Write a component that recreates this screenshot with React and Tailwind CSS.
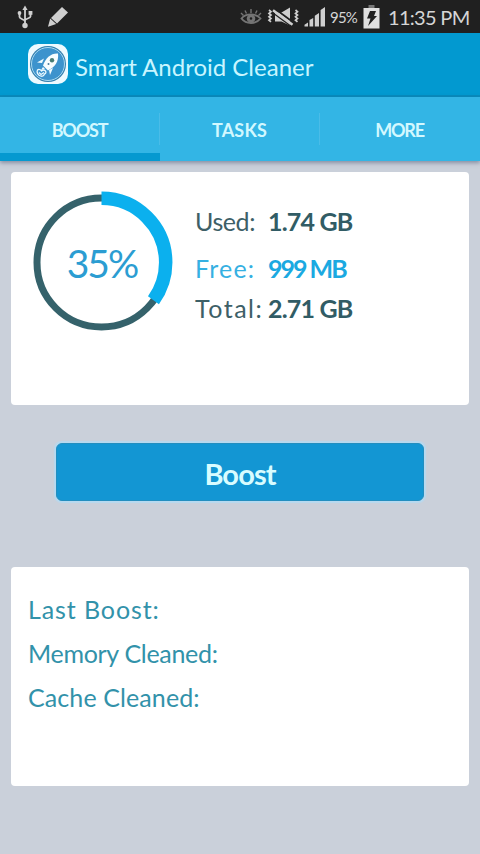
const tabs = [
  { label: 'BOOST', tracking: 'tracking-[-1.2px]', active: true },
  { label: 'TASKS', tracking: 'tracking-[0.2px]', active: false },
  { label: 'MORE', tracking: 'tracking-[-1.2px]', active: false },
];

const UsbIcon = () => (
  <svg width="16" height="24" viewBox="0 0 16 24" fill="none" stroke="#cfcfcf" strokeWidth="1.8">
    <path d="M8 4v15M2.500 8.500v3.500c0 2 5.500 2.500 5.500 4.500M13.500 8v3.500c0 2-5.500 2-5.500 4" />
    <path d="M8 .500l2.600 4.500H5.400z" fill="#cfcfcf" stroke="none" />
    <circle cx="8" cy="20.500" r="2.700" fill="#cfcfcf" stroke="none" />
    <circle cx="2.500" cy="8" r="1.900" fill="#cfcfcf" stroke="none" />
    <rect x="11.600" y="6" width="3.800" height="3.800" fill="#cfcfcf" stroke="none" />
  </svg>
);

const PencilIcon = () => (
  <svg width="22" height="22" viewBox="0 0 22 22" fill="#cfcfcf">
    <path d="M15 1l6 5.500-11 11-6-5.500z" />
    <path d="M3.200 12.500l6 5.500-8.200 2.700z" />
  </svg>
);

const EyeIcon = () => (
  <svg width="22" height="18" viewBox="0 0 22 18" fill="none" stroke="#747474">
    <path d="M1.500 10.500C6 5 16 5 20.500 10.500 16 16.500 6 16.500 1.500 10.500z" strokeWidth="1.900" />
    <circle cx="11" cy="10.500" r="2.800" strokeWidth="3" />
    <path d="M11 1v4M5 2.500l1.500 3M17 2.500l-1.500 3M1 5l2.500 2.500M21 5l-2.500 2.500" strokeWidth="1.400" />
  </svg>
);

const MuteIcon = () => (
  <svg width="32" height="20" viewBox="0 0 32 20">
    <path d="M2 3l2 1.700-2 1.700 2 1.700-2 1.700 2 1.700-2 1.700 2 1.700M28.500 3l2 1.700-2 1.700 2 1.700-2 1.700 2 1.700-2 1.700 2 1.700" fill="none" stroke="#cfcfcf" strokeWidth="1.700" />
    <path d="M8 5.500h6.500L23 .500v18l-8.500-4H8z" fill="#cfcfcf" />
    <path d="M7.500 1.500l19 14" stroke="#202020" strokeWidth="1.800" />
    <path d="M6 3.200l19.500 14.500" stroke="#cfcfcf" strokeWidth="2.600" />
    <path d="M5 5.200l19 14" stroke="#202020" strokeWidth="1.200" />
  </svg>
);

const SignalIcon = () => (
  <svg width="22" height="21" viewBox="0 0 22 21" fill="#cfcfcf">
    <path d="M.500 20.500v-1.800l3.500-2.300v4.100zM5.500 20.500v-6.400l3.700-2v8.400zM10.800 20.500v-10.800l4.200-2.800v13.600zM16.600 20.500V4L21 1v19.500z" />
  </svg>
);

const BatteryIcon = () => (
  <svg width="17" height="24" viewBox="0 0 17 24">
    <path d="M5.500 0h6v3h-6z" fill="#777" />
    <path d="M.500 3h16v20.500H.500z" fill="#e0e0e0" />
    <path d="M7 6h6l-2 5h3L5 21l2.500-7.500H4z" fill="#202020" />
  </svg>
);

const RocketLogo = () => (
  <svg width="42" height="42" viewBox="0 0 42 42">
    <rect x="1" y="1" width="40" height="40" rx="10" fill="#edfaff" />
    <circle cx="21" cy="21" r="18" fill="#347fae" />
    <circle cx="21" cy="21" r="16.500" fill="#3d93cd" stroke="#a8d9f1" strokeWidth="1" />
    <path d="M31 10.500c-7-.5-12.500 4.500-15 12l5 5c7-3.500 11-9 10-17z" fill="#f7fdff" />
    <path d="M17 15.500l-7 4 5 .5zM26 25l-3 7-1-5zM16 24l-2 3 4-1z" fill="#f0fbff" />
    <circle cx="25" cy="17.200" r="2.200" fill="#477d75" />
    <circle cx="21.500" cy="21" r="1" fill="#467b9d" />
    <path d="M10.500 27c2-2 4 1 4 1s2-2 4 0c1.500 2-1 3-1 3s-1 3-4 2-4-4-3-6zM12 29.500l2 2 3-2" fill="none" stroke="#eaf9ff" strokeWidth="1.300" />
  </svg>
);

const StatusBar = () => (
  <div className="flex h-[33px] shrink-0 items-center whitespace-nowrap bg-[#202020] text-[#d5d5d5]">
    <div className="ml-[17px]"><UsbIcon /></div>
    <div className="ml-[14px]"><PencilIcon /></div>
    <div className="ml-auto flex items-center">
      <EyeIcon />
      <div className="ml-[5px]"><MuteIcon /></div>
      <div className="ml-[5px]"><SignalIcon /></div>
      <span className="ml-[4px] w-[27px] pt-[2px] text-[15px] tracking-[-0.8px]">95%</span>
      <div className="ml-[6px]"><BatteryIcon /></div>
      <span className="ml-[8px] mr-[10px] w-[82px] text-[20px] tracking-[-0.7px]">11:35 PM</span>
    </div>
  </div>
);

const UsageRing = ({ percent }) => (
  <div className="relative size-[142px]">
    <svg className="overflow-visible" width="142" height="142" viewBox="0 0 142 142" fill="none">
      <circle cx="70.500" cy="70.500" r="64.500" stroke="#35626b" strokeWidth="7" />
      <circle
        cx="70.500"
        cy="70.500"
        r="64.200"
        stroke="#0bb0ee"
        strokeWidth="13.500"
        pathLength="100"
        strokeDasharray={`${percent} 100`}
        transform="rotate(-90 70.500 70.500)"
      />
    </svg>
    <div className="absolute inset-0 flex items-center justify-center text-[39px] tracking-[-2px] text-[#2b9dd2]">
      {percent}%
    </div>
  </div>
);

const App = () => (
  <div className="flex h-[854px] w-[480px] flex-col overflow-hidden bg-[#cad0da] font-['Lato',sans-serif]">
    <StatusBar />

    <header className="flex h-16 shrink-0 items-center border-b-2 border-[#078bbd] bg-[#0299d0] pl-[27px]">
      <RocketLogo />
      <h1 className="ml-[6px] pt-[5px] text-[24px] leading-8 text-[#c8f5ff]">Smart Android Cleaner</h1>
    </header>

    <nav className="relative grid h-16 shrink-0 grid-cols-3 bg-[#33b5e5] shadow-[0_2px_4px_rgba(70,80,110,0.5)]">
      {tabs.map((tab) => (
        <div
          key={tab.label}
          className={`flex flex-col border-b-[8px] pt-4 ${
            tab.active ? 'border-[#0599d0]' : 'border-transparent'
          }`}
        >
          <div className={`flex h-8 items-center justify-center border-r text-[18px] font-bold text-[#d2f8ff] ${tab.tracking} ${
            tab.label === 'MORE' ? 'border-transparent' : 'border-[#4abce8]'
          }`}>
            <span className="pt-[3px]">{tab.label}</span>
          </div>
        </div>
      ))}
    </nav>

    <main className="flex flex-col px-[11px] pt-[11px]">
      <section className="flex h-[233px] rounded-[4px] bg-white pl-5 pt-5">
        <UsageRing percent={35} />
        <div className="ml-[22px] flex flex-col pt-[13px] text-[25px] leading-8 text-[#3d6067]">
          <div className="flex h-[47px]">
            <span className="w-[73px] tracking-[-0.4px]">Used:</span>
            <span className="font-bold tracking-[-0.8px] text-[#315c65]">1.74 GB</span>
          </div>
          <div className="flex h-10 text-[#36b0e2]">
            <span className="w-[73px] tracking-[1.2px]">Free:</span>
            <span className="font-bold tracking-[-2px] text-[#1ba9e1]">999 MB</span>
          </div>
          <div className="flex h-10">
            <span className="w-[73px] tracking-[1.5px]">Total:</span>
            <span className="font-bold tracking-[-0.8px] text-[#315c65]">2.71 GB</span>
          </div>
        </div>
      </section>

      <button className="mx-[45px] mt-[38px] flex h-[58px] items-center justify-center rounded-md border border-[#238ebf] bg-[#1396d3] pt-[4px] text-[29px] font-bold tracking-[-0.9px] text-[#d8fcff] shadow-[0_0_1px_2px_#b7d9ef]">
        Boost
      </button>

      <section className="mt-[66px] flex h-[219px] flex-col items-start gap-3 rounded-[4px] bg-white pl-[17px] pt-[26px] text-[25px] leading-8 text-[#3292aa]">
        <p className="tracking-[0.9px]">Last Boost:</p>
        <p className="tracking-[-0.3px]">Memory Cleaned:</p>
        <p className="tracking-[0.1px]">Cache Cleaned:</p>
      </section>
    </main>
  </div>
);

export default App;
